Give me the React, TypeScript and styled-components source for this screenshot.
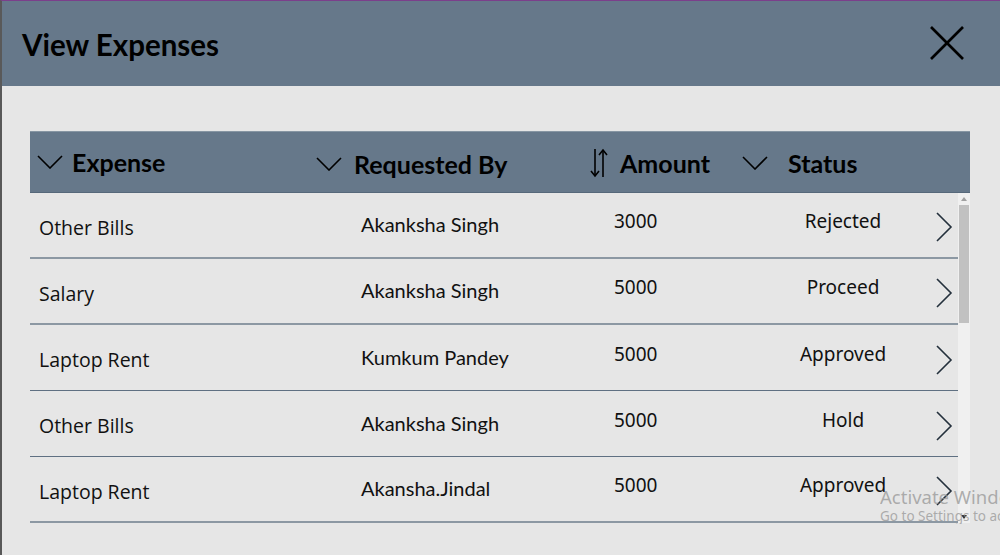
import React from "react";
import styled, { createGlobalStyle } from "styled-components";

const Global = createGlobalStyle`
  html, body { margin: 0; padding: 0; background: #e6e6e6; }
  body { width: 1000px; height: 555px; overflow: hidden; font-family: "Lato", sans-serif; }
  * { box-sizing: border-box; }
`;

const Frame = styled.div`
  position: relative;
  width: 1000px;
  height: 555px;
  overflow: hidden;
  background: #e6e6e6;
  border-top: 1px solid #7b3f8b;
  border-left: 2px solid #595959;
  display: flex;
  flex-direction: column;
`;

const TopBar = styled.header`
  height: 85px;
  background: #66788a;
  display: flex;
  align-items: center;
  justify-content: space-between;
  padding: 0 36px 0 20px;
`;

const Title = styled.h1`
  margin: 0;
  margin-top: 1px;
  font-family: "Lato", sans-serif;
  font-weight: 700;
  font-size: 29.5px;
  color: #000;
`;

const CloseBtn = styled.button`
  border: 0;
  background: none;
  padding: 0;
  width: 34px;
  height: 34px;
  margin-top: -2px;
  display: flex;
`;

const Body = styled.main`
  padding: 45px 30px 0 28px;
`;

const Table = styled.section`
  width: 940px;
`;

const HeadRow = styled.div`
  height: 62px;
  background: #66788a;
  border-top: 1px solid #8796a3;
  border-bottom: 1px solid #56687a;
  display: grid;
  grid-template-columns: 279px 274px 152px 1fr;
  padding-left: 7px;
  align-items: center;
`;

const HeadCell = styled.div<{ $gap: number; $dy?: number }>`
  display: flex;
  align-items: center;
  gap: ${(p) => p.$gap}px;
  margin-top: ${(p) => p.$dy ?? 0}px;
  font-family: "Lato", sans-serif;
  font-weight: 700;
  font-size: 25px;
  color: #000;
`;

const ListArea = styled.div`
  display: flex;
  height: 330px;
`;

const Rows = styled.div`
  width: 928px;
`;

const Row = styled.div<{ $thick: boolean }>`
  height: 66px;
  display: grid;
  grid-template-columns: 322px 253px 139px 180px 1fr;
  padding-left: 9px;
  align-items: center;
  border-bottom: ${(p) => (p.$thick ? "2px solid #8c98a3" : "1px solid #5f7082")};
`;

const Cell = styled.div<{ $font: string; $size: number; $dy: number; $center?: boolean }>`
  font-family: ${(p) => p.$font};
  font-size: ${(p) => p.$size}px;
  color: #111;
  margin-top: ${(p) => p.$dy}px;
  text-align: ${(p) => (p.$center ? "center" : "left")};
  white-space: nowrap;
`;

const ChevronCell = styled.div`
  padding-left: 3px;
  margin-top: 4px;
  display: flex;
`;

const Scrollbar = styled.div`
  width: 12px;
  background: #f0f0f0;
  display: flex;
  flex-direction: column;
  align-items: center;
`;

const ScrollArrow = styled.div`
  height: 12px;
  display: flex;
  align-items: center;
  justify-content: center;
`;

const Thumb = styled.div`
  width: 10px;
  height: 118px;
  background: #c1c1c1;
`;

const Spacer = styled.div`
  flex: 1;
`;

const Watermark = styled.div`
  position: absolute;
  left: 878px;
  top: 485px;
  width: 120px;
  overflow: hidden;
  color: rgba(150, 150, 150, 0.75);
  font-family: "Noto Sans", sans-serif;
  white-space: nowrap;
  line-height: 1.2;
`;

const WmBig = styled.div`
  font-size: 18.5px;
`;

const WmSmall = styled.div`
  font-size: 13.5px;
`;

const ChevronDown = () => (
  <svg width="26" height="14" viewBox="0 0 26 14">
    <polyline points="1,1 13,13 25,1" fill="none" stroke="#000" strokeWidth="1.6" />
  </svg>
);

const SortArrows = () => (
  <svg width="18" height="30" viewBox="0 0 18 30">
    <line x1="5" y1="1" x2="5" y2="28" stroke="#000" strokeWidth="1.6" />
    <polyline points="1,23 5,28 9,23" fill="none" stroke="#000" strokeWidth="1.6" />
    <line x1="13" y1="2" x2="13" y2="29" stroke="#000" strokeWidth="1.6" />
    <polyline points="9,7 13,2 17,7" fill="none" stroke="#000" strokeWidth="1.6" />
  </svg>
);

const ChevronRight = () => (
  <svg width="17" height="30" viewBox="0 0 17 30">
    <polyline points="1,1 15,15 1,29" fill="none" stroke="#24303c" strokeWidth="1.6" />
  </svg>
);

const CloseIcon = () => (
  <svg width="34" height="34" viewBox="0 0 34 34">
    <line x1="1" y1="1" x2="33" y2="33" stroke="#000" strokeWidth="2.6" />
    <line x1="33" y1="1" x2="1" y2="33" stroke="#000" strokeWidth="2.6" />
  </svg>
);

const data = [
  { expense: "Other Bills", by: "Akanksha Singh", amount: "3000", status: "Rejected" },
  { expense: "Salary", by: "Akanksha Singh", amount: "5000", status: "Proceed" },
  { expense: "Laptop Rent", by: "Kumkum Pandey", amount: "5000", status: "Approved" },
  { expense: "Other Bills", by: "Akanksha Singh", amount: "5000", status: "Hold" },
  { expense: "Laptop Rent", by: "Akansha.Jindal", amount: "5000", status: "Approved" },
];

export default function App() {
  return (
    <>
      <Global />
      <Frame>
        <TopBar>
          <Title>View Expenses</Title>
          <CloseBtn aria-label="Close">
            <CloseIcon />
          </CloseBtn>
        </TopBar>
        <Body>
          <Table>
            <HeadRow>
              <HeadCell $gap={9}>
                <ChevronDown />
                Expense
              </HeadCell>
              <HeadCell $gap={12} $dy={3}>
                <ChevronDown />
                Requested By
              </HeadCell>
              <HeadCell $gap={12} $dy={1}>
                <SortArrows />
                Amount
              </HeadCell>
              <HeadCell $gap={20} $dy={2}>
                <ChevronDown />
                Status
              </HeadCell>
            </HeadRow>
            <ListArea>
              <Rows>
                {data.map((r, i) => (
                  <Row key={i} $thick={i < 2 || i === data.length - 1}>
                    <Cell $font={'"Open Sans", sans-serif'} $size={19.5} $dy={4}>
                      {r.expense}
                    </Cell>
                    <Cell $font={'"Lato", sans-serif'} $size={20} $dy={-2}>
                      {r.by}
                    </Cell>
                    <Cell $font={'"Noto Sans", sans-serif'} $size={19} $dy={-8}>
                      {r.amount}
                    </Cell>
                    <Cell $font={'"Noto Sans", sans-serif'} $size={19} $dy={-8} $center>
                      {r.status}
                    </Cell>
                    <ChevronCell>
                      <ChevronRight />
                    </ChevronCell>
                  </Row>
                ))}
              </Rows>
              <Scrollbar>
                <ScrollArrow>
                  <svg width="6" height="4" viewBox="0 0 6 4">
                    <polygon points="0,4 3,0 6,4" fill="#a0a0a0" />
                  </svg>
                </ScrollArrow>
                <Thumb />
                <Spacer />
                <ScrollArrow>
                  <svg width="6" height="4" viewBox="0 0 6 4">
                    <polygon points="0,0 3,4 6,0" fill="#333" />
                  </svg>
                </ScrollArrow>
              </Scrollbar>
            </ListArea>
          </Table>
        </Body>
        <Watermark>
          <WmBig>Activate Windows</WmBig>
          <WmSmall>Go to Settings to activate Windows.</WmSmall>
        </Watermark>
      </Frame>
    </>
  );
}
